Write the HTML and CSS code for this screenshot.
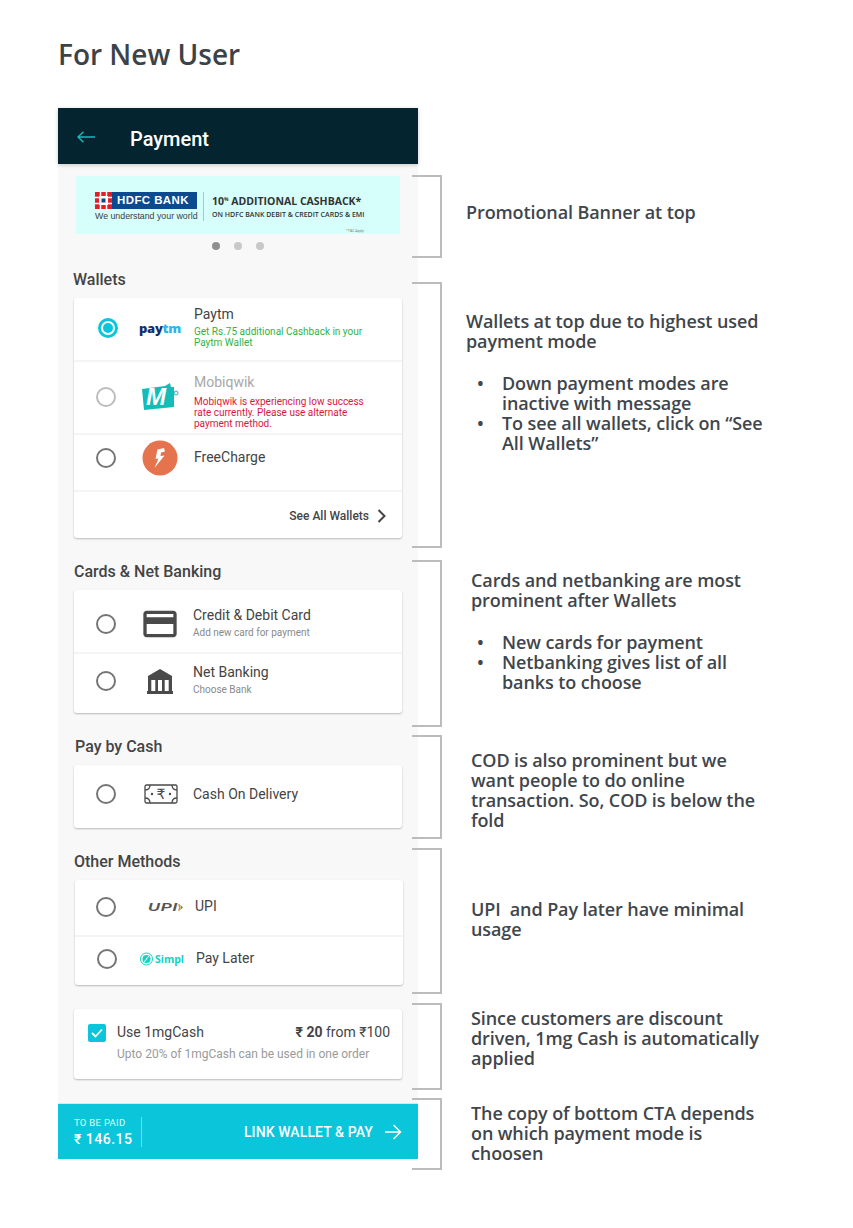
FILE: index.html
```html
<!DOCTYPE html>
<html lang="en">
<head>
  <meta charset="UTF-8">
  <title>For New User</title>
  <link rel="stylesheet" href="styles.css">
</head>
<body>

  <h1 class="page-title">For New User</h1>

  <div class="board">
    <div class="phone">
      <header class="app-bar">
        <svg class="back" width="18" height="12" viewBox="0 0 18 12"><path d="M18 6H1M6.500 .8 1 6l5.500 5.200" fill="none" stroke="#14bcbc" stroke-width="1.400"/></svg>
        <span class="app-title">Payment</span>
      </header>

      <main class="content">
        <div class="banner">
          <div class="hdfc">
            <div class="hdfc-logo">
              <svg width="17" height="17" viewBox="0 0 17 17"><rect width="17" height="17" fill="#e01f26"/><path d="M5.500 0v5.500H0M11.500 0v5.500H17M5.500 17v-5.500H0M11.500 17v-5.500H17" stroke="#fff" stroke-width="1.500" fill="none"/><rect x="4" y="4" width="9" height="9" fill="#fff"/><rect x="6.500" y="6.500" width="4" height="4" fill="#0b4a8f"/></svg>
              <span class="hdfc-name">HDFC BANK</span>
            </div>
            <div class="hdfc-tag">We understand your world</div>
          </div>
          <div class="banner-copy">
            <div class="banner-big">10<sup>%</sup> ADDITIONAL CASHBACK*</div>
            <div class="banner-small">ON HDFC BANK DEBIT &amp; CREDIT CARDS &amp; EMI</div>
          </div>
          <span class="banner-tc">*T&amp;C Apply</span>
        </div>
        <div class="dots"><span class="dot dot-on"></span><span class="dot"></span><span class="dot"></span></div>

        <h2 class="group-title group-wallets">Wallets</h2>
        <section class="card">
          <div class="row row-paytm">
            <span class="radio radio-on"></span>
            <span class="logo"><span class="paytm"><span class="paytm-a">pay</span><span class="paytm-b">tm</span></span></span>
            <div class="info info-wallet">
              <div class="name">Paytm</div>
              <div class="msg msg-ok">Get Rs.75 additional Cashback in your<br>Paytm Wallet</div>
            </div>
          </div>
          <div class="row row-mobi">
            <span class="radio radio-off"></span>
            <span class="logo">
              <svg width="38" height="29" viewBox="0 0 38 29"><path d="M1 7 24 4 29 1 30 5 33 5V25L3 28Z" fill="#12bdb8"/><circle cx="35" cy="11" r="2" fill="none" stroke="#12bdb8"/><text x="5" y="23" class="mobi-m">M</text></svg>
            </span>
            <div class="info info-wallet">
              <div class="name name-off">Mobiqwik</div>
              <div class="msg msg-err">Mobiqwik is experiencing low success<br>rate currently. Please use alternate<br>payment method.</div>
            </div>
          </div>
          <div class="row row-free">
            <span class="radio"></span>
            <span class="logo">
              <svg width="36" height="36" viewBox="0 0 36 36"><circle cx="18" cy="18" r="17.500" fill="#e5734d"/><path d="M22 8 15.500 9.500 13.500 19 16.500 18.500 12.500 28 22.500 15.500 18.500 16 19 12.500 23 11.500Z" fill="#fff"/></svg>
            </span>
            <div class="info info-wallet"><div class="name">FreeCharge</div></div>
          </div>
          <div class="see-all">
            <span>See All Wallets</span>
            <svg width="9" height="14" viewBox="0 0 9 14"><path d="M1.500 1 7.500 7l-6 6" fill="none" stroke="#444" stroke-width="2"/></svg>
          </div>
        </section>

        <h2 class="group-title">Cards &amp; Net Banking</h2>
        <section class="card">
          <div class="row row-credit">
            <span class="radio"></span>
            <span class="logo">
              <svg width="40" height="32" viewBox="0 0 24 19"><path d="M20 1.500H4c-1.110 0-1.990.890-1.990 2L2 15.500c0 1.110.890 2 2 2h16c1.110 0 2-.890 2-2v-12c0-1.110-.890-2-2-2zm0 14H4v-6h16v6zm0-10H4v-2h16v2z" fill="#4a4a4a"/></svg>
            </span>
            <div class="info">
              <div class="name">Credit &amp; Debit Card</div>
              <div class="sub">Add new card for payment</div>
            </div>
          </div>
          <div class="row row-net">
            <span class="radio"></span>
            <span class="logo">
              <svg width="26" height="25" viewBox="0 0 26 25"><path d="M13 0 25 7V11H1V7ZM1 11H4.300V22H1ZM8.300 11H11V22H8.300ZM15 11H17.700V22H15ZM21.700 11H25V22H21.700ZM0 22H26V25H0Z" fill="#4a4a4a"/></svg>
            </span>
            <div class="info">
              <div class="name">Net Banking</div>
              <div class="sub">Choose Bank</div>
            </div>
          </div>
        </section>

        <h2 class="group-title group-cash">Pay by Cash</h2>
        <section class="card">
          <div class="row row-cash">
            <span class="radio"></span>
            <span class="logo logo-cash">
              <svg width="34" height="20" viewBox="0 0 34 20"><g fill="none" stroke="#4a4a4a" stroke-width="1.300"><rect x="1" y="1" width="32" height="18" rx="1.500"/><path d="M1 6c3 0 5-2 5-5M33 6c-3 0-5-2-5-5M1 14c3 0 5 2 5 5M33 14c-3 0-5 2-5 5"/></g><circle cx="8" cy="10" r="1.200" fill="#4a4a4a"/><circle cx="26" cy="10" r="1.200" fill="#4a4a4a"/><text x="17" y="15" class="cash-sign">₹</text></svg>
            </span>
            <div class="info"><div class="name">Cash On Delivery</div></div>
          </div>
        </section>

        <h2 class="group-title">Other Methods</h2>
        <section class="card card-other">
          <div class="row row-upi">
            <span class="radio"></span>
            <span class="logo logo-upi">
              <span class="upi">UPI</span>
              <svg width="5" height="7" viewBox="0 0 7 9"><path d="M0 0h2.500L4 4.500 2 9H0L1.500 4.500Z" fill="#e8862a"/><path d="M3.500 1 7 4.500 3 8 4.500 4.500Z" fill="#3b9b4a"/></svg>
            </span>
            <div class="info info-upi"><div class="name">UPI</div></div>
          </div>
          <div class="row row-simpl">
            <span class="radio"></span>
            <span class="logo logo-simpl">
              <svg width="13" height="14" viewBox="0 0 13 14"><circle cx="6.500" cy="7" r="6" fill="none" stroke="#12d2c2" stroke-width="1"/><circle cx="6.500" cy="7" r="4" fill="#12d2c2"/><path d="M4 9.500C7 9 6 5 9 4.500" stroke="#fff" fill="none"/></svg>
              <span class="simpl">Simpl</span>
            </span>
            <div class="info info-simpl"><div class="name">Pay Later</div></div>
          </div>
        </section>

        <section class="card cash-card">
          <span class="check">
            <svg width="12" height="10" viewBox="0 0 12 10"><path d="M1 5l3.500 3.500L11 1.500" fill="none" stroke="#fff" stroke-width="1.800"/></svg>
          </span>
          <div class="cash-info">
            <div class="cash-top">
              <span>Use 1mgCash</span>
              <span><b>₹ 20</b> from ₹100</span>
            </div>
            <div class="cash-sub">Upto 20% of 1mgCash can be used in one order</div>
          </div>
        </section>
      </main>

      <footer class="pay-bar">
        <div class="total">
          <div class="total-label">TO BE PAID</div>
          <div class="total-value">₹ 146.15</div>
        </div>
        <div class="cta">
          <span>LINK WALLET &amp; PAY</span>
          <svg width="17" height="16" viewBox="0 0 17 16"><path d="M0 8h15.500M8.500 1l7 7-7 7" fill="none" stroke="#fff" stroke-width="1.500"/></svg>
        </div>
      </footer>
    </div>

    <div class="notes">
      <div class="note note-1">
        <span class="bracket"></span>
        <p class="note-text">Promotional Banner at top</p>
      </div>
      <div class="note note-2">
        <span class="bracket"></span>
        <div class="note-text">
          Wallets at top due to highest used<br>payment mode
          <ul>
            <li>Down payment modes are<br>inactive with message</li>
            <li>To see all wallets, click on “See<br>All Wallets”</li>
          </ul>
        </div>
      </div>
      <div class="note note-3">
        <span class="bracket"></span>
        <div class="note-text">
          Cards and netbanking are most<br>prominent after Wallets
          <ul>
            <li>New cards for payment</li>
            <li>Netbanking gives list of all<br>banks to choose</li>
          </ul>
        </div>
      </div>
      <div class="note note-4">
        <span class="bracket"></span>
        <p class="note-text">COD is also prominent but we<br>want people to do online<br>transaction. So, COD is below the<br>fold</p>
      </div>
      <div class="note note-5">
        <span class="bracket"></span>
        <p class="note-text">UPI&nbsp; and Pay later have minimal<br>usage</p>
      </div>
      <div class="note note-6">
        <span class="bracket"></span>
        <p class="note-text">Since customers are discount<br>driven, 1mg Cash is automatically<br>applied</p>
      </div>
      <div class="note note-7">
        <span class="bracket"></span>
        <p class="note-text">The copy of bottom CTA depends<br>on which payment mode is<br>choosen</p>
      </div>
    </div>
  </div>

</body>
</html>
```

FILE: styles.css
```css
* {
  box-sizing: border-box;
}
body {
  margin: 0;
  background-color: white;
  font-family: Roboto, sans-serif;
  color: #444;
  overflow-x: hidden;
}
.page-title {
  margin: 0;
  padding: 36px 0 0 58px;
  height: 108px;
  font-family: "Open Sans", sans-serif;
  font-size: 28px;
  line-height: 36px;
  font-weight: 600;
  color: #3c4348;
}
.board {
  display: flex;
  align-items: flex-start;
  padding-left: 58px;
}

/* phone */
.phone {
  width: 360px;
  flex: none;
  position: relative;
  z-index: 1;
}
.app-bar {
  height: 56px;
  background-color: #04252f;
  display: flex;
  align-items: center;
  padding: 0 0 0 19px;
  box-shadow: 0 1px 4px rgba(0,0,0,0.2);
  position: relative;
}
.back {
  margin-top: 1px;
}
.app-title {
  margin: 5px 0 0 35px;
  color: white;
  font-size: 20px;
  font-weight: 500;
}
.content {
  background-color: #f8f8f8;
  height: 939px;
  padding: 12px 0 0 16px;
}

/* banner */
.banner {
  width: 324px;
  height: 58px;
  margin-left: 2px;
  background-color: #d6fffc;
  display: flex;
  align-items: center;
  padding: 0 0 0 19px;
  position: relative;
}
.hdfc {
  width: 104px;
  padding: 3px 2px 0 0;
}
.hdfc-logo {
  display: flex;
  align-items: center;
  background-color: #0b4a8f;
  height: 17px;
  width: 102px;
}
.hdfc-name {
  margin-left: 5px;
  color: white;
  font-family: "Liberation Sans", sans-serif;
  font-weight: bold;
  font-size: 11.500px;
  letter-spacing: 0.400px;
}
.hdfc-tag {
  font-family: "Liberation Sans", sans-serif;
  font-size: 8.800px;
  line-height: 12px;
  margin-top: 1px;
  color: #3d3d3d;
  white-space: nowrap;
}
.banner-copy {
  margin: 3px 0 0 4px;
  padding: 2px 0 0 8px;
  border-left: 1px solid #a9c8c6;
  height: 29px;
  font-family: "Open Sans", sans-serif;
  color: #333;
  white-space: nowrap;
}
.banner-big {
  font-size: 10.500px;
  line-height: 15px;
  font-weight: 700;
}
.banner-big sup {
  font-size: 5px;
  line-height: 0;
}
.banner-small {
  font-size: 7px;
  line-height: 11px;
  font-weight: 600;
}
.banner-tc {
  position: absolute;
  right: 36px;
  bottom: 1px;
  font-size: 3.500px;
  color: #777;
}
.dots {
  display: flex;
  justify-content: center;
  gap: 14px;
  margin: 8px 0 0 -16px;
  width: 360px;
}
.dot {
  width: 8px;
  height: 8px;
  border-radius: 50%;
  background-color: #c8c8c8;
}
.dot-on {
  background-color: #8f8f8f;
}

/* groups and rows */
.group-title {
  margin: 24px 0 8px;
  font-size: 16px;
  line-height: 20px;
  font-weight: 500;
  color: #444;
}
.group-wallets {
  margin: 20px 0 8px -1px;
}
.group-cash {
  margin-left: 1px;
}
.card {
  width: 328px;
  background-color: white;
  border-radius: 3px;
  box-shadow: 0 1px 2px rgba(0,0,0,0.25);
}
.card-other {
  margin-left: 1px;
}
.row {
  display: flex;
  align-items: center;
  padding-left: 22px;
}
.row + .row {
  border-top: 2px solid #f4f4f4;
}
.radio {
  width: 20px;
  height: 20px;
  flex: none;
  border: 2px solid #757575;
  border-radius: 50%;
  margin-right: 14px;
}
.radio-off {
  border-color: #bdbdbd;
}
.radio-on {
  margin: 0 12px 0 2px;
  border: 3px solid #0bc5da;
  position: relative;
}
.radio-on::after {
  content: "";
  position: absolute;
  inset: 2px;
  border-radius: 50%;
  background-color: #0bc5da;
}
.logo {
  width: 60px;
  flex: none;
  display: flex;
  justify-content: center;
  align-items: center;
}
.info {
  margin-left: 3px;
}
.info-wallet {
  margin-left: 4px;
}
.info-upi {
  margin-left: 5px;
}
.info-simpl {
  margin-left: 5px;
}
.name {
  font-size: 14px;
  line-height: 17px;
  color: #444;
}
.name-off {
  color: #a8a8a8;
}
.sub {
  margin-top: 3px;
  font-size: 10px;
  line-height: 12px;
  color: #8a8a8a;
}
.msg {
  margin-top: 3px;
  font-size: 10px;
  line-height: 11px;
}
.msg-ok {
  color: #2fb344;
}
.msg-err {
  color: #d8173f;
}
.row-paytm {
  height: 62px;
  padding-bottom: 2px;
}
.row-paytm .info {
  margin-top: -3px;
}
.row-mobi {
  height: 73px;
  padding-bottom: 3px;
}
.row-mobi .radio {
  margin-top: 2px;
}
.row-mobi .logo {
  margin-top: 0;
}
.row-mobi .info {
  margin-top: 10px;
}
.row-mobi .msg {
  margin-top: 5px;
}
.row-free {
  height: 57px;
  padding-bottom: 10px;
}
.row-credit {
  height: 62px;
  padding-top: 6px;
}
.row-credit .info {
  margin-top: -2px;
}
.row-net {
  height: 61px;
  padding-bottom: 5px;
}
.row-net .info {
  margin-top: -3px;
}
.row-cash {
  height: 63px;
  padding-bottom: 5px;
}
.row-upi {
  height: 55px;
  padding: 0 0 1px 21px;
}
.row-upi .info {
  margin-top: -2px;
}
.row-simpl {
  height: 50px;
  padding-bottom: 5px;
}

/* logos */
.paytm {
  font-family: "Open Sans", sans-serif;
  font-weight: 800;
  font-size: 13px;
  line-height: 14px;
  letter-spacing: -0.300px;
}
.paytm-a {
  color: #12306f;
}
.paytm-b {
  color: #2bb5ee;
}
.mobi-m {
  font-family: "Liberation Sans", sans-serif;
  font-weight: bold;
  font-style: italic;
  font-size: 24px;
  fill: white;
}
.cash-sign {
  font-family: "DejaVu Sans", sans-serif;
  font-size: 14px;
  text-anchor: middle;
  fill: #4a4a4a;
}
.logo-cash {
  padding-left: 2px;
}
.logo-upi {
  padding-left: 11px;
}
.upi {
  font-family: "Liberation Sans", sans-serif;
  font-style: italic;
  font-weight: bold;
  font-size: 11px;
  letter-spacing: 0.500px;
  transform: scaleX(1.500);
  transform-origin: left center;
  margin-right: 10px;
  color: #555;
}
.logo-simpl {
  gap: 2px;
  padding-left: 2px;
}
.simpl {
  font-family: "Open Sans", sans-serif;
  font-size: 10.500px;
  font-weight: 700;
  color: #12d2c2;
}
.see-all {
  height: 48px;
  border-top: 2px solid #f4f4f4;
  display: flex;
  align-items: center;
  justify-content: flex-end;
  gap: 8px;
  padding: 2px 16px 0 0;
  font-size: 12px;
  font-weight: 500;
  color: #444;
}

/* 1mg cash */
.cash-card {
  margin-top: 24px;
  height: 70px;
  display: flex;
  align-items: flex-start;
  padding: 15px 12px 0 14px;
}
.check {
  width: 18px;
  height: 18px;
  flex: none;
  border-radius: 2px;
  background-color: #0bc5da;
  display: flex;
  align-items: center;
  justify-content: center;
}
.cash-info {
  flex: 1;
  margin-left: 11px;
}
.cash-top {
  display: flex;
  justify-content: space-between;
  font-size: 14px;
  line-height: 17px;
}
.cash-sub {
  margin-top: 6px;
  font-size: 12px;
  line-height: 14px;
  color: #9a9a9a;
}

/* bottom bar */
.pay-bar {
  height: 56px;
  border-top: 1px solid #e2e2e2;
  background-color: #0bc5da;
  display: flex;
  align-items: center;
  justify-content: space-between;
  padding: 0 16px 0 16px;
  color: white;
}
.total {
  height: 30px;
  width: 68px;
  border-right: 1px solid rgba(255,255,255,0.4);
}
.total-label {
  font-size: 9.500px;
  line-height: 12px;
  letter-spacing: 0.300px;
  opacity: 0.9;
}
.total-value {
  margin-top: 2px;
  font-size: 14px;
  line-height: 16px;
  font-weight: 500;
  letter-spacing: 0.500px;
  white-space: nowrap;
}
.cta {
  display: flex;
  align-items: center;
  gap: 12px;
  font-size: 14px;
  font-weight: 500;
  letter-spacing: 0.100px;
}

/* annotations */
.notes {
  flex: none;
  width: 380px;
  margin-top: 67px;
  font-family: "Open Sans", sans-serif;
  font-weight: 600;
  font-size: 18px;
  line-height: 20px;
  letter-spacing: -0.100px;
  color: #3f464c;
}
.note {
  display: flex;
  align-items: flex-start;
  margin-left: -6px;
  position: relative;
  z-index: 2;
}
.bracket {
  width: 30px;
  height: 100%;
  flex: none;
  border: 2px solid #bcbcbc;
  border-left: 0;
}
.note-text {
  margin: 0;
  padding-left: 24px;
  white-space: nowrap;
}
.note ul {
  margin: 22px 0 0;
  padding: 0 0 0 36px;
  list-style: none;
}
.note li::before {
  content: "•";
  display: inline-block;
  width: 25px;
  margin-left: -25px;
}
.note-1 { height: 83px; }
.note-1 .note-text { padding-top: 27px; }
.note-2 { height: 266px; margin-top: 24px; }
.note-2 .note-text { padding-top: 29px; }
.note-3 { height: 167px; margin-top: 12px; }
.note-3 .note-text { padding-top: 10px; margin-left: 5px; }
.note-3 ul { padding-left: 31px; }
.note-4 { height: 104px; margin-top: 8px; }
.note-4 .note-text { padding-top: 15px; margin-left: 5px; }
.note-5 { height: 146px; margin-top: 9px; }
.note-5 .note-text { padding-top: 51px; margin-left: 5px; }
.note-6 { height: 87px; margin-top: 9px; }
.note-6 .note-text { padding-top: 5px; margin-left: 5px; }
.note-7 { height: 72px; margin-top: 8px; }
.note-7 .note-text { padding-top: 5px; margin-left: 5px; }
```
